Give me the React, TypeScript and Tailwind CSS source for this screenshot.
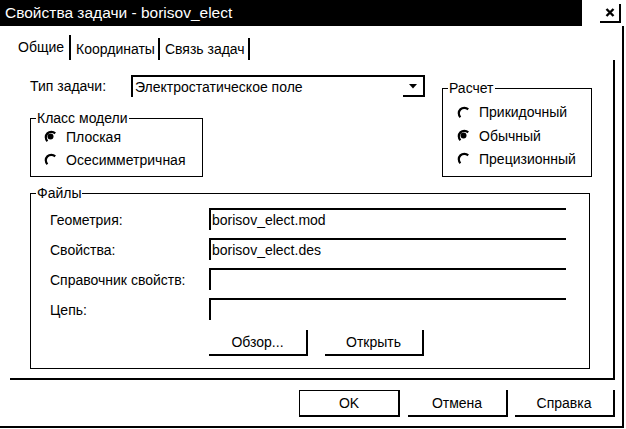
import React from "react";

function Radio({ checked }: { checked?: boolean }) {
  return (
    <svg width="13" height="13" viewBox="0 0 13 13" className="shrink-0">
      <path d="M11.2 3.4 A5.4 5.4 0 0 0 3.4 11.2" fill="none" stroke="black" strokeWidth="2.2" />
      {checked && <circle cx="6.5" cy="6.5" r="3" fill="black" />}
    </svg>
  );
}

function RadioRow({ label, checked, h }: { label: string; checked?: boolean; h: string }) {
  return (
    <div className={`flex items-center ${h}`}>
      <Radio checked={checked} />
      <span className="ml-[9px]">{label}</span>
    </div>
  );
}

function Field({ value }: { value?: string }) {
  return (
    <div className="flex h-[22px] w-[357px] items-center border-l-2 border-t-2 border-black pl-[1px] leading-[16px]">
      {value}
    </div>
  );
}

function PushButton({ label, w }: { label: string; w: string }) {
  return (
    <div className={`flex h-[26px] ${w} items-center justify-center border-b-2 border-r-2 border-black`}>
      {label}
    </div>
  );
}

const fileRows = [
  { label: "Геометрия:", value: "borisov_elect.mod" },
  { label: "Свойства:", value: "borisov_elect.des" },
  { label: "Справочник свойств:", value: "" },
  { label: "Цепь:", value: "" },
];

export default function App() {
  return (
    <div
      className="h-[429px] w-[626px] overflow-hidden bg-white text-[14px] leading-[16px] text-black"
      style={{ fontFamily: '"Liberation Sans", Arial, sans-serif' }}
    >
      {/* title bar */}
      <div className="flex h-[26px] items-start">
        <div className="flex h-[26px] w-[582px] items-center bg-black pl-[5px] text-[15.5px] text-white">
          Свойства задачи - borisov_elect
        </div>
        <div className="ml-[18px] mt-[4px] flex h-[19px] w-[21px] items-center justify-center border-b-2 border-r-2 border-black">
          <svg width="10" height="9" viewBox="0 0 10 9">
            <path d="M1.5 1 L8.5 8 M8.5 1 L1.5 8" stroke="black" strokeWidth="2.4" />
          </svg>
        </div>
      </div>

      {/* dialog body */}
      <div className="h-[402px] w-[624px] border-b-2 border-r-2 border-black pt-[9px]">
        {/* tabs */}
        <div className="ml-[10px] flex h-[25px] items-end">
          <div className="flex h-[25px] items-center border-r-2 border-black pb-[2px] pl-[8px] pr-[5px]">Общие</div>
          <div className="flex h-[22px] items-center border-r-2 border-black pl-[5px] pr-[3px]">Координаты</div>
          <div className="flex h-[22px] items-center border-r-2 border-black pl-[5px] pr-[3px]">Связь задач</div>
        </div>

        {/* tab panel */}
        <div className="ml-[10px] h-[320px] w-[605px] border-b-2 border-r-2 border-black pl-[20px]">
          <div className="flex items-start">
            <div className="mt-[15px] flex w-[395px] flex-col">
              <div className="flex h-[22px] items-center">
                <span className="w-[101px]">Тип задачи:</span>
                <div className="flex h-[22px] w-[294px] items-start border-l-2 border-t-2 border-black">
                  <span className="flex h-[20px] flex-1 items-center pl-[2px]">Электростатическое поле</span>
                  <div className="flex h-[20px] w-[22px] items-center justify-center border-b-2 border-r-2 border-black">
                    <svg width="8" height="5" viewBox="0 0 8 5">
                      <path d="M0 0 H8 L4 4.5 Z" fill="black" />
                    </svg>
                  </div>
                </div>
              </div>

              <fieldset className="mt-[13px] h-[67px] w-[173px] border border-black">
                <legend className="ml-[5px] px-[1px] leading-[16px]">Класс модели</legend>
                <div className="-mt-[1px] flex flex-col pl-[13px]">
                  <RadioRow label="Плоская" checked h="h-[23px]" />
                  <RadioRow label="Осесимметричная" h="h-[23px]" />
                </div>
              </fieldset>
            </div>

            <fieldset className="ml-[17px] mt-[20px] h-[97px] w-[150px] border border-black">
              <legend className="ml-[5px] px-[1px] leading-[16px]">Расчет</legend>
              <div className="mt-[4px] flex flex-col pl-[14px]">
                <RadioRow label="Прикидочный" h="h-[24px]" />
                <RadioRow label="Обычный" checked h="h-[23px]" />
                <RadioRow label="Прецизионный" h="h-[23px]" />
              </div>
            </fieldset>
          </div>

          <fieldset className="mt-[8px] h-[184px] w-[560px] border border-black">
            <legend className="ml-[5px] px-[1px] leading-[16px]">Файлы</legend>
            <div className="mt-[7px] flex flex-col gap-[8px] pl-[19px]">
              {fileRows.map((row) => (
                <div key={row.label} className="flex h-[22px] items-center">
                  <span className="w-[159px] pt-[2px]">{row.label}</span>
                  <Field value={row.value} />
                </div>
              ))}
              <div className="mt-[2px] flex gap-[17px] pl-[159px]">
                <PushButton label="Обзор..." w="w-[99px]" />
                <PushButton label="Открыть" w="w-[99px]" />
              </div>
            </div>
          </fieldset>
        </div>

        {/* dialog buttons */}
        <div className="mt-[10px] flex justify-end pr-[7px]">
          <div className="h-[27px] w-[101px] border border-black">
            <div className="flex h-full w-full items-center justify-center border-b border-r border-black">OK</div>
          </div>
          <div className="ml-[8px] flex h-[27px] w-[100px] items-center justify-center border-b-2 border-r-2 border-black">
            Отмена
          </div>
          <div className="ml-[7px] flex h-[27px] w-[100px] items-center justify-center border-b-2 border-r-2 border-black">
            Справка
          </div>
        </div>
      </div>
    </div>
  );
}
